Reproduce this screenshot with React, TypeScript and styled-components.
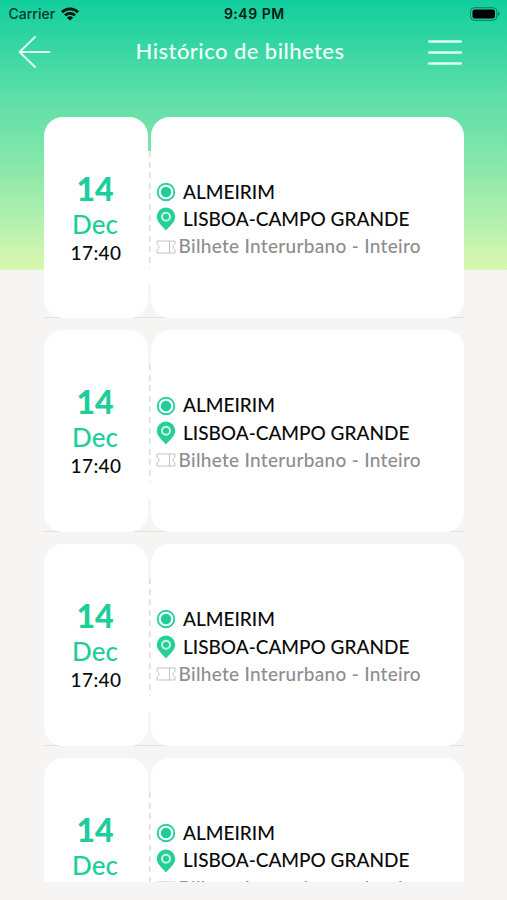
import React from 'react';
import styled, { createGlobalStyle } from 'styled-components';

const GlobalStyle = createGlobalStyle`
  * { box-sizing: border-box; }
  body { margin: 0; background: #f6f5f3; }
`;

const Screen = styled.div`
  width: 507px;
  height: 900px;
  overflow: hidden;
  display: flex;
  flex-direction: column;
  font-family: Lato, sans-serif;
  background: linear-gradient(180deg, #10cf9d 0, #55dda7 85px, #84e7aa 160px, #b2f0ad 220px, #dbf8b0 270px) 0 0 / 100% 270px no-repeat #f6f5f3;
`;

const StatusBar = styled.div`
  height: 28px;
  flex: none;
  display: grid;
  grid-template-columns: 1fr auto 1fr;
  align-items: center;
  padding: 0 7px 0 8.5px;
  color: #06382c;
  font: 500 14px/28px Inter, sans-serif;
`;

const Carrier = styled.div`
  display: flex;
  align-items: center;
  gap: 6px;
`;

const Clock = styled.div`
  font-weight: 600;
  letter-spacing: 0.5px;
  color: #031a14;
`;

const Battery = styled.div`
  display: flex;
  justify-content: flex-end;
`;

const Header = styled.header`
  height: 48px;
  flex: none;
  display: grid;
  grid-template-columns: 60px 1fr 60px;
  align-items: center;
  padding: 0 45px 0 18px;
`;

const Title = styled.h1`
  margin: -3px 0 0;
  text-align: center;
  white-space: nowrap;
  color: #f3fffa;
  font: 500 22px/30px Lato, sans-serif;
  letter-spacing: 0.45px;
`;

const IconButton = styled.button<{ $end?: boolean }>`
  border: 0;
  padding: 0;
  background: none;
  display: flex;
  justify-content: ${p => (p.$end ? 'flex-end' : 'flex-start')};
`;

const List = styled.main`
  width: 420px;
  height: 765.4px;
  flex: none;
  margin: 40.6px 0 0 44px;
  overflow: hidden;
  display: flex;
  flex-direction: column;
  gap: 12px;
`;

const Ticket = styled.article`
  flex: none;
  height: 201.8px;
  display: grid;
  grid-template-columns: 104px 3px 313px;
  background:
    linear-gradient(#dfe2df, #dfe2df) 0 100% / 15px 1px no-repeat,
    linear-gradient(#dfe2df, #dfe2df) 90px 100% / 31px 1px no-repeat,
    linear-gradient(#dfe2df, #dfe2df) 100% 100% / 14px 1px no-repeat;
`;

const DatePanel = styled.div`
  background: #fff;
  border-radius: 19px;
  padding: 53px 2px 0 0;
  display: flex;
  flex-direction: column;
  align-items: center;
  color: #1dce9a;
`;

const Day = styled.div`
  font: 900 32px/38px Lato, sans-serif;
`;

const Month = styled.div`
  font: 500 26px/32px Lato, sans-serif;
`;

const Time = styled.div`
  margin-left: 2px;
  color: #0a0a0a;
  font: 500 19px/26px Lato, sans-serif;
  letter-spacing: 0.4px;
`;

const Perforation = styled.div`
  margin: 34px 0;
  background:
    repeating-linear-gradient(180deg, #dcdddc 0 6px, transparent 6px 10.6px) 1px 0 / 1.5px 118px no-repeat,
    #fff;
`;

const TripPanel = styled.div`
  background: #fff;
  border-radius: 19px;
  padding: 61.6px 0 0 5px;
`;

const Row = styled.div<{ $muted?: boolean }>`
  height: 27.4px;
  display: grid;
  grid-template-columns: ${p => (p.$muted ? '22.5px' : '27px')} auto;
  justify-content: start;
  align-items: center;
  white-space: nowrap;
  color: ${p => (p.$muted ? '#8e8e8e' : '#0a0a0a')};
  font: 500 19px/27px Lato, sans-serif;

  svg { display: block; }
`;

const Label = styled.span<{ $spacing: number }>`
  margin-top: -1.4px;
  letter-spacing: ${p => p.$spacing}px;
`;

const WifiIcon = () => (
  <svg width="18" height="14" viewBox="0 0 18 14" fill="none" stroke="#02120e" strokeWidth="2.7">
    <path d="M1 5.2a11.5 11.5 0 0 1 16 0M4 8.4a7.2 7.2 0 0 1 10 0" />
    <path d="M9 13.6 5.9 10.7a4.6 4.6 0 0 1 6.2 0z" fill="#02120e" stroke="none" />
  </svg>
);

const BatteryIcon = () => (
  <svg width="31" height="14" viewBox="0 0 31 14">
    <rect x="1.5" y=".7" width="26.4" height="12.6" rx="3.7" fill="none" stroke="#087d60" strokeWidth="1" />
    <rect x="3.5" y="2.6" width="22.4" height="8.8" rx="2" fill="#000" />
    <path d="M29 4.8c2 .8 2 3.6 0 4.4z" fill="#087d60" />
  </svg>
);

const BackIcon = () => (
  <svg width="33" height="32" viewBox="0 0 33 32" fill="none" stroke="#dcfff2" strokeWidth="1.9" strokeLinecap="round" strokeLinejoin="round">
    <path d="M17 1 1.5 16 17 31M1.5 16H31.5" />
  </svg>
);

const MenuIcon = () => (
  <svg width="34" height="27" viewBox="0 0 34 27" stroke="#dcfff2" strokeWidth="2.6" strokeLinecap="round">
    <path d="M1.3 2.5h31.4M1.3 13.5h31.4M1.3 24.5h31.4" />
  </svg>
);

const OriginIcon = () => (
  <svg width="20" height="20" viewBox="0 0 20 20">
    <circle cx="10" cy="10" r="8.3" fill="none" stroke="#2bd09d" strokeWidth="1.9" />
    <circle cx="10" cy="10" r="5.2" fill="#1dce97" />
  </svg>
);

const PinIcon = () => (
  <svg width="20" height="24" viewBox="0 0 20 24">
    <path d="M10 .5A9.2 9.2 0 0 0 .8 9.7C.8 15.2 7 19.5 10 23.5c3-4 9.2-8.3 9.2-13.8A9.2 9.2 0 0 0 10 .5z" fill="#25cf98" />
    <circle cx="10" cy="9.7" r="4" fill="none" stroke="#cff7e7" strokeWidth="1.9" />
  </svg>
);

const TicketIcon = () => (
  <svg width="20" height="14" viewBox="0 0 20 14" fill="none" stroke="#c4c4c4" strokeWidth="1">
    <path d="M1 1h18v3.2c-2.6.8-2.6 4.8 0 5.6V13H1V9.8c2.6-.8 2.6-4.8 0-5.6V1zM13.5 1v12" />
  </svg>
);

const tickets = Array.from({ length: 4 }, (_, id) => ({
  id,
  day: '14',
  month: 'Dec',
  time: '17:40',
  from: 'ALMEIRIM',
  to: 'LISBOA-CAMPO GRANDE',
  kind: 'Bilhete Interurbano - Inteiro',
}));

export default function App() {
  return (
    <Screen>
      <GlobalStyle />
      <StatusBar>
        <Carrier>Carrier <WifiIcon /></Carrier>
        <Clock>9:49 PM</Clock>
        <Battery><BatteryIcon /></Battery>
      </StatusBar>
      <Header>
        <IconButton aria-label="Voltar"><BackIcon /></IconButton>
        <Title>Histórico de bilhetes</Title>
        <IconButton $end aria-label="Menu"><MenuIcon /></IconButton>
      </Header>
      <List>
        {tickets.map(t => (
          <Ticket key={t.id}>
            <DatePanel>
              <Day>{t.day}</Day>
              <Month>{t.month}</Month>
              <Time>{t.time}</Time>
            </DatePanel>
            <Perforation />
            <TripPanel>
              <Row><OriginIcon /><Label $spacing={0}>{t.from}</Label></Row>
              <Row><PinIcon /><Label $spacing={0}>{t.to}</Label></Row>
              <Row $muted><TicketIcon /><Label $spacing={0.3}>{t.kind}</Label></Row>
            </TripPanel>
          </Ticket>
        ))}
      </List>
    </Screen>
  );
}
